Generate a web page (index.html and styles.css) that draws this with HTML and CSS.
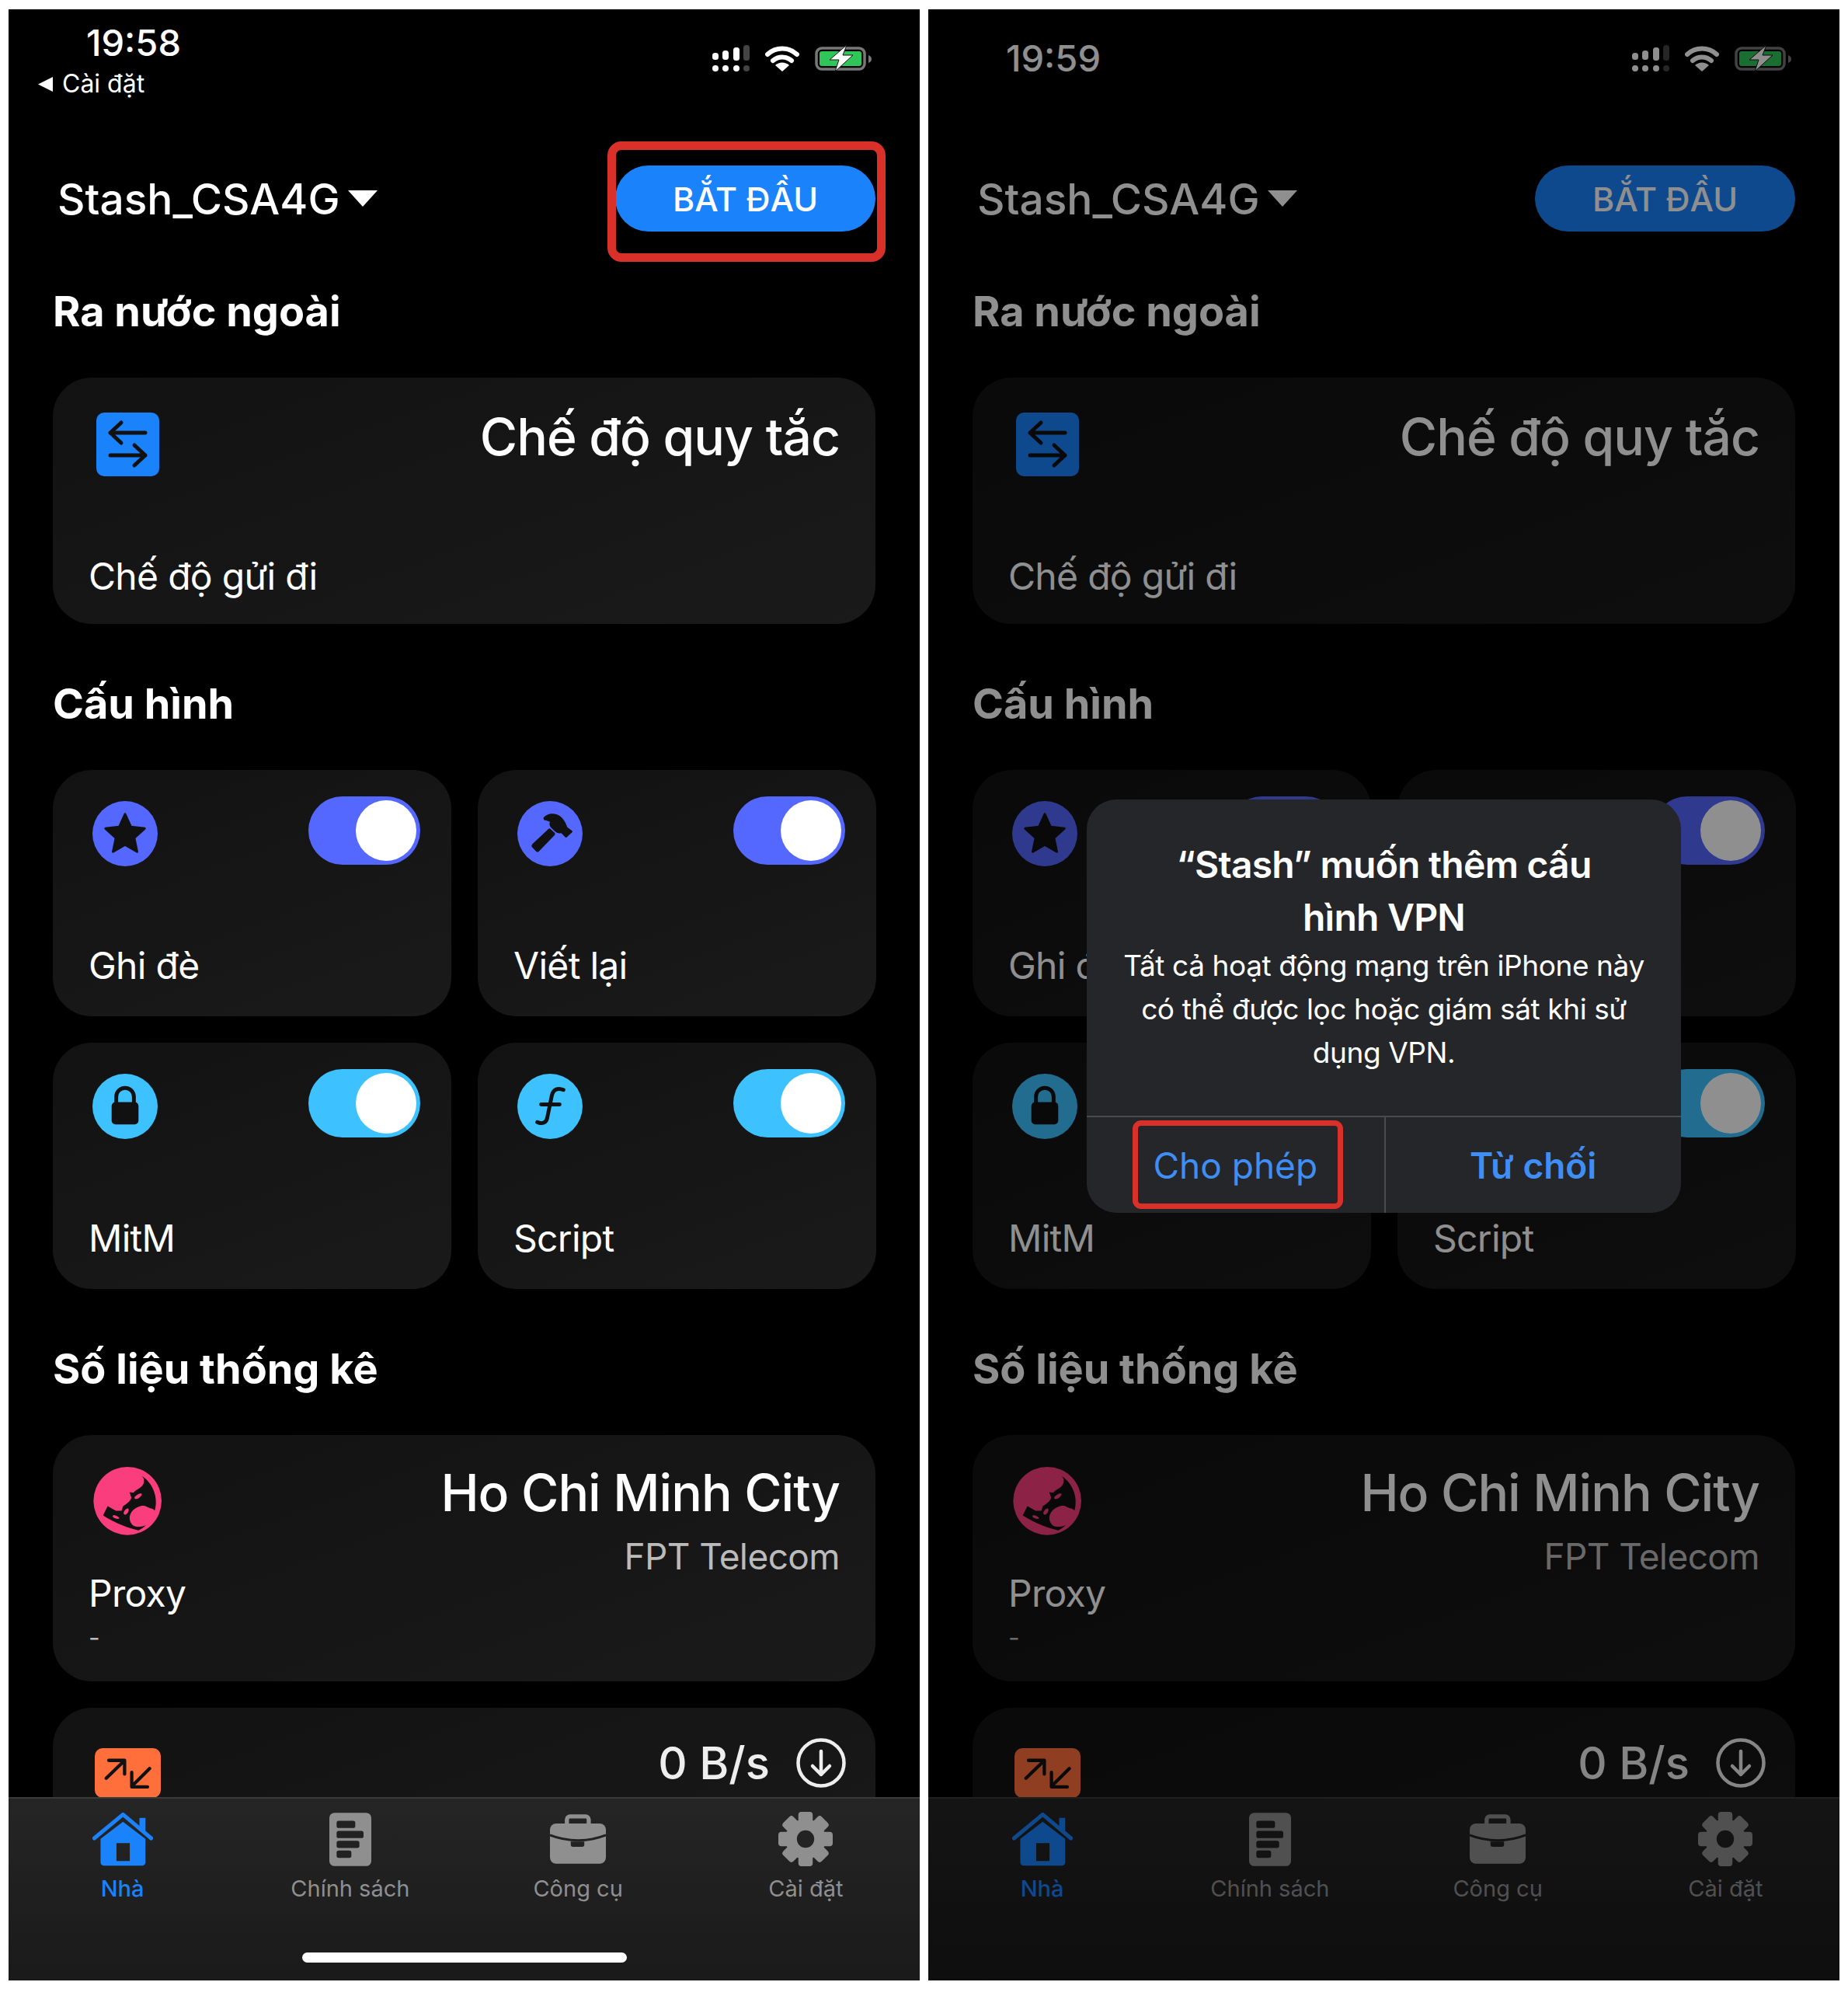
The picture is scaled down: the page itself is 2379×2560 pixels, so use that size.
FILE: index.html
```html
<!DOCTYPE html>
<html lang="vi">
<head>
    <meta charset="UTF-8">
    <meta name="viewport" content="width=device-width, initial-scale=1.0">
    <title>Stash</title>
    <link rel="stylesheet" href="styles.css">
</head>
<body>
    <!-- shared icons -->
    <svg class="defs" width="0" height="0">
        <symbol id="i-signal" viewBox="0 0 48 35">
            <rect x="0" y="10" width="8" height="9" rx="3.5" fill="#fff"/>
            <rect x="13" y="7" width="8" height="12" rx="3.5" fill="#fff"/>
            <rect x="27" y="3" width="8" height="17" rx="3.5" fill="#fff"/>
            <rect x="40" y="0" width="8" height="20" rx="3.5" fill="#444"/>
            <circle cx="4" cy="30" r="4" fill="#fff"/>
            <circle cx="17" cy="30" r="4" fill="#fff"/>
            <circle cx="31" cy="30" r="4" fill="#fff"/>
            <circle cx="44" cy="30" r="4" fill="#444"/>
        </symbol>
        <symbol id="i-wifi" viewBox="0 0 44 34">
            <path d="M3 12a28 28 0 0 1 38 0M10 20a18 18 0 0 1 24 0" fill="none" stroke="#fff" stroke-width="6" stroke-linecap="round"/>
            <path d="M13 26a13 13 0 0 1 18 0l-9 8z" fill="#fff"/>
        </symbol>
        <symbol id="i-battery" viewBox="0 0 74 34">
            <rect x="2" y="4" width="62" height="27" rx="7" fill="none" stroke="#777" stroke-width="3.5"/>
            <rect x="6" y="8" width="54" height="19" rx="3" fill="#30c558"/>
            <path d="M69 13c3 1 4 3 4 5s-1 4-4 5z" fill="#777"/>
            <path d="M41 0L19 19h12l-5 15 23-21H36z" fill="#fff" stroke="#111" stroke-width="1"/>
        </symbol>
        <symbol id="i-swap" viewBox="0 0 81 82">
            <path d="M63 26H18M32 13L18 26l14 13M18 55h45M49 42l14 13-14 13" fill="none" stroke="#111" stroke-width="5" stroke-linecap="round" stroke-linejoin="round"/>
        </symbol>
        <symbol id="i-star" viewBox="0 0 85 85">
            <path d="M42.500 17l7.500 16.500 18 2.200-13.500 12.300 3.700 18-15.700-9-15.700 9 3.700-18L17 35.700l18-2.200z" fill="#111" stroke="#111" stroke-width="3" stroke-linejoin="round"/>
        </symbol>
        <symbol id="i-hammer" viewBox="80 50 248 248">
            <path d="M135 215L198 156a6 6 0 0 1 8 0l16 15a6 6 0 0 1 0 8l-60 62a8 8 0 0 1-11 0l-13-14a8 8 0 0 1-1-12z" fill="#111"/>
            <path d="M180 112c12-13 30-17 48-12 20 6 33 24 42 50l18 13a4 4 0 0 1 0 6l-20 18a4 4 0 0 1-6 0l-15-15c-10 2-18 0-26-8l-14-14c-5-6-6-14-3-21-8-4-16-6-22-7-3-2-3-8-2-10z" fill="#111"/>
        </symbol>
        <symbol id="i-lock" viewBox="0 0 85 85">
            <path d="M31 38V30a11.500 11.500 0 0 1 23 0v8" fill="none" stroke="#111" stroke-width="5"/>
            <rect x="25" y="37" width="35" height="29" rx="5" fill="#111"/>
        </symbol>
        <symbol id="i-func" viewBox="0 0 85 85">
            <path d="M60 21c-7-3-13-1-15 7l-6 29c-1 7-7 9-13 6M31 40h24" fill="none" stroke="#111" stroke-width="5" stroke-linecap="round"/>
        </symbol>
        <symbol id="i-globe" viewBox="62 80 265 265">
            <circle cx="195" cy="212" r="132" fill="#fa3d7d"/>
            <path d="M250 115A122 122 0 0 1 238 326C200 318 150 300 100 268L118 232 150 250 172 250 178 232C190 225 205 215 210 200L203 178 218 180C225 170 240 165 250 155 262 145 262 125 250 115z" fill="#111"/>
            <path d="M205 290c-8-25 10-50 40-58 20-5 25 5 38 8 15 2 24 12 20 30-5 22-30 40-60 42-20 1-32-5-38-22z" fill="#fa3d7d"/>
            <path d="M222 198c5-8 20-18 28-14 3 4-8 18-18 20-6 1-12-1-10-6zM180 258c3-10 12-20 18-16 5 5-2 20-10 23-5 1-9-2-8-7zM138 268c8-3 22 4 26 11-3 5-18 2-26-5z" fill="#fa3d7d"/>
        </symbol>
        <symbol id="i-updown" viewBox="125 90 255 195">
            <path d="M168 208L238 140M178 138h62v54M338 170L270 238M268 185v57h62" fill="none" stroke="#111" stroke-width="13" stroke-linecap="round" stroke-linejoin="round"/>
        </symbol>
        <symbol id="i-circle-down" viewBox="0 0 64 64">
            <circle cx="32" cy="32" r="29.500" fill="none" stroke="#eee" stroke-width="4.500"/>
            <path d="M32 17v30M21 36l11 11 11-11" fill="none" stroke="#eee" stroke-width="4.500" stroke-linecap="round" stroke-linejoin="round"/>
        </symbol>
        <symbol id="i-home" viewBox="115 330 232 205">
            <path d="M295 350h23v50h-23z" fill="#1a82fb"/>
            <path d="M122 428L232 337 340 428" fill="none" stroke="#1a82fb" stroke-width="15" stroke-linecap="round" stroke-linejoin="round"/>
            <path fill-rule="evenodd" d="M146 430L232 365 318 430V520a13 13 0 0 1-13 13H159a13 13 0 0 1-13-13zM207 447v68h51v-68z" fill="#1a82fb"/>
        </symbol>
        <symbol id="i-doc" viewBox="1030 337 162 206">
            <rect x="1030" y="337" width="162" height="206" rx="20" fill="#8f8f8f"/>
            <rect x="1058" y="368" width="72" height="28" rx="8" fill="#222"/>
            <rect x="1058" y="407" width="104" height="28" rx="8" fill="#222"/>
            <rect x="1058" y="445" width="88" height="28" rx="8" fill="#222"/>
            <rect x="1058" y="483" width="57" height="28" rx="8" fill="#222"/>
        </symbol>
        <symbol id="i-case" viewBox="55 35 215 190">
            <path d="M120 78V55a12 12 0 0 1 12-12h60a12 12 0 0 1 12 12v23" fill="none" stroke="#8f8f8f" stroke-width="16"/>
            <rect x="55" y="70" width="215" height="155" rx="24" fill="#8f8f8f"/>
            <path d="M55 115c35 14 70 20 108 20s72-6 107-20" fill="none" stroke="#222" stroke-width="9"/>
            <path d="M135 140h52v12a8 8 0 0 1-8 8h-36a8 8 0 0 1-8-8z" fill="#222"/>
        </symbol>
        <symbol id="i-gear" viewBox="0 0 72 72">
            <g fill="#8f8f8f">
                <rect x="26.500" y="0" width="19" height="72" rx="4"/>
                <rect x="26.500" y="0" width="19" height="72" rx="4" transform="rotate(45 36 36)"/>
                <rect x="26.500" y="0" width="19" height="72" rx="4" transform="rotate(90 36 36)"/>
                <rect x="26.500" y="0" width="19" height="72" rx="4" transform="rotate(135 36 36)"/>
            </g>
            <circle cx="36" cy="36" r="19" fill="none" stroke="#8f8f8f" stroke-width="15"/>
            <circle cx="36" cy="36" r="11.500" fill="#232323"/>
        </symbol>
    </svg>

    <div class="screens">
        <!-- left phone -->
        <div class="phone">
            <div class="status">
                <div class="status-left">
                    <span class="time">19:58</span>
                    <span class="back"><svg class="back-arrow" viewBox="0 0 18 18"><path d="M18 0v18L0 9z" fill="#fff"/></svg>Cài đặt</span>
                </div>
                <div class="status-icons">
                    <svg class="ic-signal"><use href="#i-signal"/></svg>
                    <svg class="ic-wifi"><use href="#i-wifi"/></svg>
                    <svg class="ic-battery"><use href="#i-battery"/></svg>
                </div>
            </div>
            <div class="header">
                <div class="profile">Stash_CSA4G<span class="caret"></span></div>
                <button class="start">BẮT ĐẦU</button>
            </div>
            <h2 class="section-title">Ra nước ngoài</h2>
            <div class="card card-mode">
                <div class="card-left">
                    <svg class="square-icon blue"><use href="#i-swap"/></svg>
                    <div class="label">Chế độ gửi đi</div>
                </div>
                <div class="value">Chế độ quy tắc</div>
            </div>
            <h2 class="section-title">Cấu hình</h2>
            <div class="grid">
                <div class="tile">
                    <div class="tile-top">
                        <svg class="round-icon indigo"><use href="#i-star"/></svg>
                        <span class="toggle indigo"><span class="knob"></span></span>
                    </div>
                    <div class="label">Ghi đè</div>
                </div>
                <div class="tile">
                    <div class="tile-top">
                        <svg class="round-icon indigo"><use href="#i-hammer"/></svg>
                        <span class="toggle indigo"><span class="knob"></span></span>
                    </div>
                    <div class="label">Viết lại</div>
                </div>
                <div class="tile">
                    <div class="tile-top">
                        <svg class="round-icon cyan"><use href="#i-lock"/></svg>
                        <span class="toggle cyan"><span class="knob"></span></span>
                    </div>
                    <div class="label">MitM</div>
                </div>
                <div class="tile">
                    <div class="tile-top">
                        <svg class="round-icon cyan"><use href="#i-func"/></svg>
                        <span class="toggle cyan"><span class="knob"></span></span>
                    </div>
                    <div class="label">Script</div>
                </div>
            </div>
            <h2 class="section-title">Số liệu thống kê</h2>
            <div class="card card-proxy">
                <div class="card-left">
                    <svg class="globe"><use href="#i-globe"/></svg>
                    <div class="label label-proxy">Proxy</div>
                    <div class="dash">-</div>
                </div>
                <div class="card-right">
                    <div class="value">Ho Chi Minh City</div>
                    <div class="sub">FPT Telecom</div>
                </div>
            </div>
            <div class="card card-speed">
                <svg class="square-icon orange"><use href="#i-updown"/></svg>
                <div class="speed">
                    <span class="speed-num">0 B/s</span>
                    <svg class="circle-down"><use href="#i-circle-down"/></svg>
                </div>
            </div>
            <div class="tabbar">
                <div class="tab active"><span class="tab-icon"><svg class="ic-home"><use href="#i-home"/></svg></span>Nhà</div>
                <div class="tab"><span class="tab-icon"><svg class="ic-doc"><use href="#i-doc"/></svg></span>Chính sách</div>
                <div class="tab"><span class="tab-icon"><svg class="ic-case"><use href="#i-case"/></svg></span>Công cụ</div>
                <div class="tab"><span class="tab-icon"><svg class="ic-gear"><use href="#i-gear"/></svg></span>Cài đặt</div>
                <div class="home-bar"></div>
            </div>
            <div class="mark mark-start"></div>
        </div>

        <!-- right phone, with the dialog -->
        <div class="phone">
            <div class="status">
                <div class="status-left">
                    <span class="time time-low">19:59</span>
                </div>
                <div class="status-icons">
                    <svg class="ic-signal"><use href="#i-signal"/></svg>
                    <svg class="ic-wifi"><use href="#i-wifi"/></svg>
                    <svg class="ic-battery"><use href="#i-battery"/></svg>
                </div>
            </div>
            <div class="header">
                <div class="profile">Stash_CSA4G<span class="caret"></span></div>
                <button class="start">BẮT ĐẦU</button>
            </div>
            <h2 class="section-title">Ra nước ngoài</h2>
            <div class="card card-mode">
                <div class="card-left">
                    <svg class="square-icon blue"><use href="#i-swap"/></svg>
                    <div class="label">Chế độ gửi đi</div>
                </div>
                <div class="value">Chế độ quy tắc</div>
            </div>
            <h2 class="section-title">Cấu hình</h2>
            <div class="grid">
                <div class="tile">
                    <div class="tile-top">
                        <svg class="round-icon indigo"><use href="#i-star"/></svg>
                        <span class="toggle indigo"><span class="knob"></span></span>
                    </div>
                    <div class="label">Ghi đè</div>
                </div>
                <div class="tile">
                    <div class="tile-top">
                        <svg class="round-icon indigo"><use href="#i-hammer"/></svg>
                        <span class="toggle indigo"><span class="knob"></span></span>
                    </div>
                    <div class="label">Viết lại</div>
                </div>
                <div class="tile">
                    <div class="tile-top">
                        <svg class="round-icon cyan"><use href="#i-lock"/></svg>
                        <span class="toggle cyan"><span class="knob"></span></span>
                    </div>
                    <div class="label">MitM</div>
                </div>
                <div class="tile">
                    <div class="tile-top">
                        <svg class="round-icon cyan"><use href="#i-func"/></svg>
                        <span class="toggle cyan"><span class="knob"></span></span>
                    </div>
                    <div class="label">Script</div>
                </div>
            </div>
            <h2 class="section-title">Số liệu thống kê</h2>
            <div class="card card-proxy">
                <div class="card-left">
                    <svg class="globe"><use href="#i-globe"/></svg>
                    <div class="label label-proxy">Proxy</div>
                    <div class="dash">-</div>
                </div>
                <div class="card-right">
                    <div class="value">Ho Chi Minh City</div>
                    <div class="sub">FPT Telecom</div>
                </div>
            </div>
            <div class="card card-speed">
                <svg class="square-icon orange"><use href="#i-updown"/></svg>
                <div class="speed">
                    <span class="speed-num">0 B/s</span>
                    <svg class="circle-down"><use href="#i-circle-down"/></svg>
                </div>
            </div>
            <div class="tabbar">
                <div class="tab active"><span class="tab-icon"><svg class="ic-home"><use href="#i-home"/></svg></span>Nhà</div>
                <div class="tab"><span class="tab-icon"><svg class="ic-doc"><use href="#i-doc"/></svg></span>Chính sách</div>
                <div class="tab"><span class="tab-icon"><svg class="ic-case"><use href="#i-case"/></svg></span>Công cụ</div>
                <div class="tab"><span class="tab-icon"><svg class="ic-gear"><use href="#i-gear"/></svg></span>Cài đặt</div>
            </div>
            <div class="dim"></div>
            <div class="dialog">
                <div class="dialog-text">
                    <div class="dialog-title">“Stash” muốn thêm cấu<br>hình VPN</div>
                    <div class="dialog-body">Tất cả hoạt động mạng trên iPhone này<br>có thể được lọc hoặc giám sát khi sử<br>dụng VPN.</div>
                </div>
                <div class="dialog-actions">
                    <div class="action">Cho phép</div>
                    <div class="action action-strong">Từ chối</div>
                </div>
                <div class="mark mark-allow"></div>
            </div>
        </div>
    </div>
</body>
</html>
```

FILE: styles.css
```css
* {
    box-sizing: border-box;
}

body {
    margin: 0;
    background-color: #fff;
    font-family: 'Inter', 'Liberation Sans', sans-serif;
    color: #fff;
}

.defs {
    display: none;
}

.screens {
    display: flex;
    gap: 11px;
    padding: 12px 11px;
}

.phone {
    position: relative;
    width: 1173px;
    height: 2537px;
    overflow: hidden;
    background-color: #000;
}

/* status bar */
.status {
    display: flex;
    justify-content: space-between;
    height: 201px;
    padding: 13px 61px 0 38px;
}

.status-left {
    display: flex;
    flex-direction: column;
}

.time {
    margin-left: 62px;
    font-size: 47px;
    font-weight: 500;
    line-height: 60px;
}

.time-low {
    margin-top: 20px;
}

.back {
    display: flex;
    align-items: center;
    gap: 12px;
    margin-top: 3px;
    font-size: 32px;
    line-height: 40px;
}

.back-arrow {
    width: 19px;
    height: 19px;
}

.status-icons {
    display: flex;
    gap: 20px;
    margin-top: 33px;
}

.ic-signal {
    width: 48px;
    height: 35px;
}

.ic-wifi {
    width: 44px;
    height: 34px;
}

.ic-battery {
    width: 74px;
    height: 34px;
}

/* profile row */
.header {
    display: flex;
    align-items: center;
    justify-content: space-between;
    height: 85px;
    margin-bottom: 4px;
    padding: 0 57px 0 63px;
}

.profile {
    display: flex;
    align-items: center;
    font-size: 55px;
    font-weight: 500;
}

.caret {
    width: 0;
    height: 0;
    margin-left: 10px;
    border-left: 19px solid transparent;
    border-right: 19px solid transparent;
    border-top: 21px solid #fff;
}

.start {
    width: 335px;
    height: 85px;
    border: none;
    border-radius: 43px;
    background-color: #1a82fb;
    color: #fff;
    font-family: inherit;
    font-size: 43px;
    font-weight: 500;
}

.section-title {
    margin: 68px 57px 50px;
    font-size: 54px;
    font-weight: 700;
    line-height: 70px;
}

/* cards */
.card {
    display: flex;
    justify-content: space-between;
    height: 317px;
    margin: 0 57px 34px;
    padding: 45px 46px 31px;
    border-radius: 50px;
    background: linear-gradient(160deg, #121212, #1a1a1a);
}

.card-mode {
    margin-bottom: 33px;
}

.card-left {
    display: flex;
    flex-direction: column;
    align-items: flex-start;
}

.card-left .label {
    margin-top: auto;
}

.label {
    font-size: 48px;
    font-weight: 400;
    line-height: 60px;
    letter-spacing: -0.7px;
}

.value {
    margin-top: 8px;
    font-size: 66px;
    font-weight: 500;
    line-height: 46px;
    letter-spacing: -1px;
    text-align: right;
}

.square-icon {
    width: 81px;
    height: 82px;
    margin-left: 10px;
    border-radius: 10px;
}

.blue {
    background-color: #1a82fb;
}

.orange {
    width: 85px;
    height: 64px;
    margin-left: 8px;
    background-color: #ff6f3c;
}

.grid {
    display: grid;
    grid-template-columns: 513px 513px;
    gap: 34px;
    margin: 0 47px 0 57px;
}

.tile {
    display: flex;
    flex-direction: column;
    justify-content: space-between;
    height: 317px;
    padding: 34px 40px 35px 46px;
    border-radius: 50px;
    background: linear-gradient(160deg, #121212, #1a1a1a);
}

.tile-top {
    display: flex;
    justify-content: space-between;
}

.round-icon {
    width: 84px;
    height: 84px;
    margin: 6px 0 0 5px;
    border-radius: 50%;
}

.indigo {
    background-color: #5468ff;
}

.cyan {
    background-color: #3dc2ff;
}

.toggle {
    display: flex;
    justify-content: flex-end;
    width: 144px;
    height: 88px;
    padding: 5px;
    border-radius: 44px;
}

.knob {
    width: 78px;
    height: 78px;
    border-radius: 50%;
    background-color: #fff;
}

/* stats */
.card-proxy {
    padding-top: 41px;
}

.card-proxy .card-left .label {
    margin-top: 45px;
}

.globe {
    width: 88px;
    height: 88px;
    margin-left: 6px;
}

.dash {
    margin-top: 2px;
    font-size: 32px;
    line-height: 50px;
    color: #bbb;
}

.card-right {
    text-align: right;
}

.card-proxy .value {
    margin-top: 10px;
}

.sub {
    margin-top: 30px;
    font-size: 46px;
    line-height: 58px;
    letter-spacing: -0.6px;
    color: #bbb;
}

.card-speed {
    padding-top: 52px;
    padding-right: 38px;
}

.speed {
    display: flex;
    gap: 34px;
    margin-top: -13px;
    align-items: flex-start;
}

.speed-num {
    font-size: 58px;
    font-weight: 500;
    line-height: 64px;
    color: #eee;
}

.circle-down {
    width: 64px;
    height: 64px;
}

/* tab bar */
.tabbar {
    position: absolute;
    left: 0;
    right: 0;
    bottom: 0;
    display: grid;
    grid-template-columns: repeat(4, 1fr);
    height: 236px;
    padding-top: 15px;
    border-top: 2px solid #3a3a3a;
    background: linear-gradient(180deg, #252525, #1a1a1a);
}

.tab {
    display: flex;
    flex-direction: column;
    align-items: center;
    font-size: 29px;
    line-height: 40px;
    color: #8f8f8f;
}

.tab.active {
    color: #1a82fb;
    font-weight: 500;
}

.tab-icon {
    display: flex;
    align-items: center;
    height: 74px;
    margin-bottom: 7px;
}

.ic-home {
    width: 78px;
    height: 69px;
}

.ic-doc {
    width: 54px;
    height: 69px;
}

.ic-case {
    width: 72px;
    height: 64px;
}

.ic-gear {
    width: 70px;
    height: 70px;
}

.home-bar {
    position: absolute;
    left: 378px;
    bottom: 23px;
    width: 418px;
    height: 13px;
    border-radius: 7px;
    background-color: #fff;
}

/* right phone overlay */
.dim {
    position: absolute;
    inset: 0;
    background-color: rgba(0, 0, 0, 0.44);
}

.dialog {
    position: absolute;
    left: 204px;
    top: 1017px;
    width: 765px;
    height: 532px;
    border-radius: 38px;
    background-color: #25262a;
}

.dialog-text {
    height: 407px;
    padding-top: 50px;
    text-align: center;
}

.dialog-title {
    font-size: 48px;
    font-weight: 600;
    line-height: 68px;
    letter-spacing: -0.75px;
}

.dialog-body {
    font-size: 37px;
    line-height: 56px;
    letter-spacing: -0.4px;
}

.dialog-actions {
    display: grid;
    grid-template-columns: 1fr 1fr;
    height: 125px;
    border-top: 2px solid #4a4b4f;
}

.action {
    display: flex;
    align-items: center;
    justify-content: center;
    font-size: 46px;
    color: #3f8ef5;
}

.action-strong {
    border-left: 2px solid #4a4b4f;
    font-weight: 600;
}

/* red marks drawn on top of the screenshot */
.mark {
    position: absolute;
    border-style: solid;
    border-color: #d9302a;
}

.mark-start {
    left: 771px;
    top: 170px;
    width: 358px;
    height: 155px;
    border-width: 11px;
    border-radius: 18px;
}

.mark-allow {
    left: 59px;
    top: 413px;
    width: 271px;
    height: 114px;
    border-width: 7px;
    border-radius: 11px;
}
```
